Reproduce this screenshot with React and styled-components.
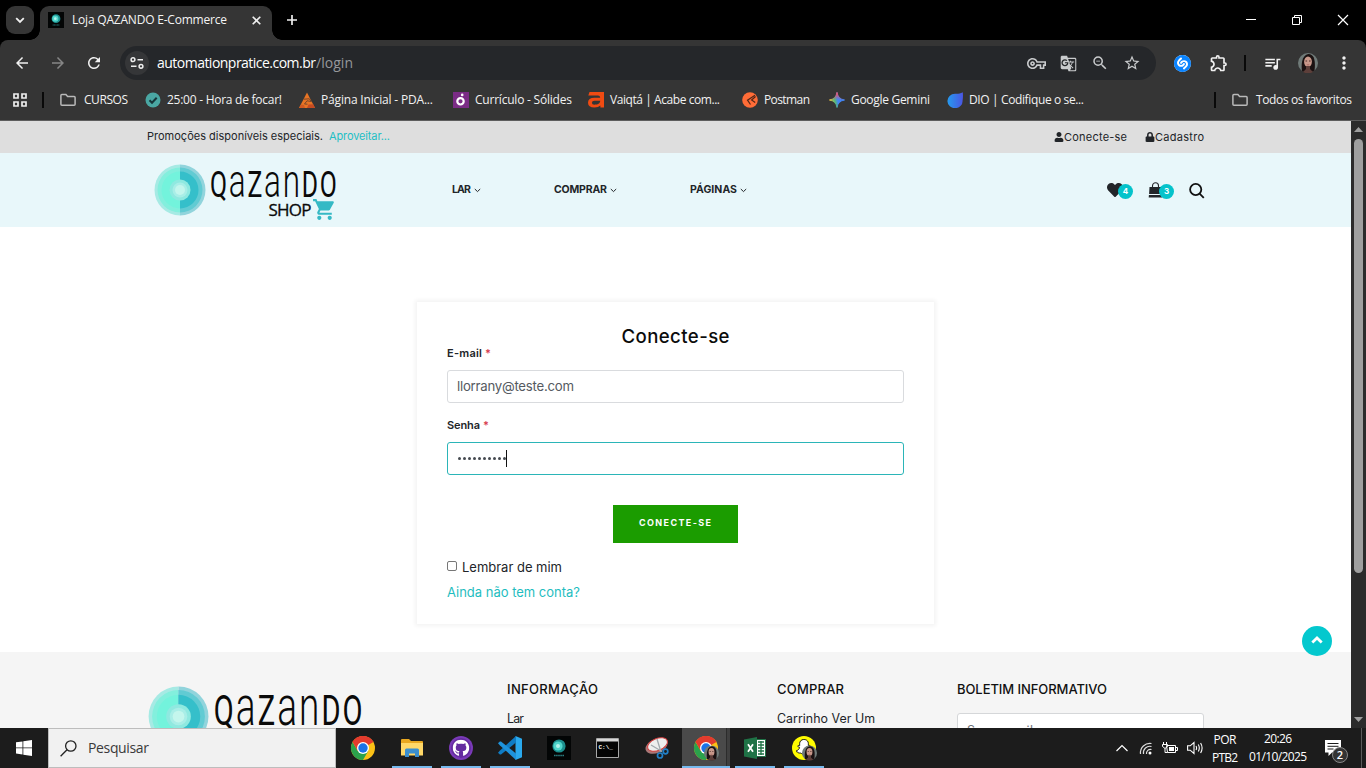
import React, { useLayoutEffect, useRef, useState } from 'react';
import styled, { createGlobalStyle, css } from 'styled-components';
import {
  MdArrowBack, MdArrowForward, MdRefresh, MdOutlineVpnKey, MdGTranslate, MdZoomOut,
  MdStarBorder, MdOutlineExtension, MdQueueMusic, MdMoreVert, MdShoppingCart,
} from 'react-icons/md';
import { FaHeart, FaUser, FaLock, FaGithub, FaSnapchatGhost } from 'react-icons/fa';
import { SiShazam } from 'react-icons/si';

const ui = '"Open Sans", "Noto Sans", sans-serif';
const shop = 'Inter, "Open Sans", sans-serif';

const Global = createGlobalStyle`
  * { box-sizing: border-box; }
  body { margin: 0; overflow: hidden; background: #000; }
  svg { display: block; flex: none; }
`;

/* Text that tracks its letters to fill a given measure */
const FitBox = styled.span`
  display: block;
  flex: none;
  white-space: pre;
  width: ${(p) => p.$w}px;
  & > span { display: inline-block; }
`;

function Fit({ w, children }) {
  const ref = useRef(null);
  const [space, setSpace] = useState(0);
  useLayoutEffect(() => {
    const natural = ref.current.getBoundingClientRect().width;
    setSpace((w - natural) / Math.max(1, children.length - 1));
  }, [w, children]);
  return (
    <FitBox $w={w}>
      <span ref={ref} style={{ letterSpacing: space }}>{children}</span>
    </FitBox>
  );
}

const Screen = styled.div`
  width: 1366px;
  height: 768px;
  display: flex;
  flex-direction: column;
  overflow: hidden;
  background: #000;
`;

/* ---------- Browser ---------- */
const TabStrip = styled.div`
  height: 40px;
  flex: none;
  display: flex;
  align-items: center;
  padding-left: 6px;
  font: 12px/16px ${ui};
  color: #f4f4f4;
`;
const TabSearch = styled.div`
  width: 28px;
  height: 28px;
  border-radius: 9px;
  background: #353535;
  display: grid;
  place-items: center;
`;
const Tab = styled.div`
  position: relative;
  align-self: flex-end;
  width: 232px;
  height: 34px;
  margin-left: 6px;
  padding: 0 11px 6px 8px;
  display: flex;
  align-items: center;
  gap: 8px;
  background: #353535;
  border-radius: 9px 9px 0 0;
  &::before, &::after {
    content: '';
    position: absolute;
    bottom: 0;
    width: 10px;
    height: 10px;
  }
  &::before { left: -10px; background: radial-gradient(circle at 0 0, transparent 9.5px, #353535 10px); }
  &::after { right: -10px; background: radial-gradient(circle at 100% 0, transparent 9.5px, #353535 10px); }
`;
const TabClose = styled.span`margin-left: auto; display: block;`;
const NewTab = styled.span`margin-left: 14px;`;
const WindowButtons = styled.div`
  margin-left: auto;
  display: flex;
  align-items: center;
  gap: 34px;
  padding-right: 17px;
`;
const Chrome = styled.div`
  height: 81px;
  flex: none;
  background: #353535;
  border-radius: 8px 8px 0 0;
  border-bottom: 1px solid #5d5d5d;
  color: #f1f1f1;
`;
const Toolbar = styled.div`
  height: 46px;
  display: flex;
  align-items: center;
  padding: 0 12px 0 13px;
`;
const NavButtons = styled.div`
  display: flex;
  gap: 18px;
  width: 107px;
  & svg:nth-child(2) { color: #868686; }
`;
const Omnibox = styled.div`
  width: 1036px;
  height: 34px;
  border-radius: 17px;
  background: #25272a;
  display: flex;
  align-items: center;
  padding: 0 15px 0 5px;
  font: 14px/20px ${ui};
  color: #fff;
`;
const SiteInfo = styled.div`
  width: 24px;
  height: 24px;
  margin-right: 8px;
  border-radius: 50%;
  background: #353638;
  display: grid;
  place-items: center;
`;
const Path = styled.span`color: #96989b;`;
const OmniIcons = styled.div`
  margin-left: auto;
  display: flex;
  align-items: center;
  gap: 14px;
  color: #c9cbcd;
`;
const Extensions = styled.div`
  display: flex;
  align-items: center;
  margin-left: auto;
`;
const Ext = styled.span`margin-left: 18px;`;
const Face = styled.span`margin: 0 16px;`;
const ShazamDisc = styled.span`
  border-radius: 50%;
  background: #fff;
  color: #0a84ff;
`;
const Divider = styled.i`
  width: 2px;
  height: 16px;
  background: #090909;
  margin: 0 ${(p) => p.$right}px 0 ${(p) => p.$left}px;
`;
const Bookmarks = styled.div`
  height: 34px;
  padding: 0 14px 6px 13px;
  display: flex;
  align-items: center;
  font: 12px/16px ${ui};
  color: #f1f1f1;
`;
const Bookmark = styled.div`
  display: flex;
  align-items: center;
  gap: ${(p) => p.$gap || 6}px;
  margin-left: ${(p) => p.$left}px;
`;

/* ---------- Shop page ---------- */
const Viewport = styled.div`
  flex: 1;
  min-height: 0;
  display: flex;
`;
const Page = styled.div`
  position: relative;
  width: 1351px;
  height: 607px;
  overflow: hidden;
  background: #fff;
  font-family: ${shop};
  color: #222529;
`;
const Scrollbar = styled.div`
  width: 15px;
  background: #2b2b2b;
  display: flex;
  flex-direction: column;
  align-items: center;
  padding: 6px 0;
`;
const ScrollThumb = styled.div`
  width: 9px;
  height: 434px;
  margin: 7px 0 auto;
  border-radius: 5px;
  background: #9f9f9f;
`;
const PromoBar = styled.div`
  height: 32px;
  padding: 0 147px 2px;
  background: #dedede;
  display: flex;
  align-items: center;
  font-size: 11px;
  line-height: 16px;
`;
const PromoLink = styled.span`margin-left: 6px; color: #1fbec5;`;
const Account = styled.div`
  display: flex;
  align-items: center;
  margin-left: ${(p) => p.$left || 'auto'};
  padding-top: 1px;
`;
const ShopHeader = styled.header`
  height: 74px;
  padding: 0 146px 0 154px;
  background: #e8f7fa;
  display: flex;
`;
const HeaderLogo = styled.div`width: 298px; padding-top: 11px;`;
const Menu = styled.nav`
  display: flex;
  gap: 73px;
  font-size: 10.5px;
  font-weight: 700;
  line-height: 72px;
`;
const MenuItem = styled.span`
  display: flex;
  align-items: center;
  gap: 3px;
`;
const HeaderIcons = styled.div`
  margin-left: auto;
  display: flex;
  gap: 26px;
  padding-top: 29px;
`;
const IconSlot = styled.span`position: relative; width: 15px; height: 16px;`;
const Badge = styled.b`
  position: absolute;
  left: 11px;
  top: 2px;
  width: 15px;
  height: 15px;
  border-radius: 50%;
  background: #05c3cb;
  color: #fff;
  font-size: 8px;
  line-height: 15px;
  text-align: center;
`;
const LoginCard = styled.form`
  width: 517px;
  height: 322px;
  margin: 75px 0 0 417px;
  padding: 22px 30px 0;
  background: #fff;
  box-shadow: 0 0 4px 2px #f3f3f3;
`;
const Title = styled.h1`
  margin: 0;
  display: flex;
  justify-content: center;
  font-size: 18.6px;
  font-weight: 500;
  line-height: 24px;
  color: #0b0b0b;
`;
const Label = styled.label`
  display: flex;
  gap: 3px;
  margin-top: ${(p) => p.$top}px;
  font-size: 11px;
  line-height: 16px;
  font-weight: 600;
`;
const Star = styled.span`color: #d8404f;`;
const Field = styled.div`
  height: 33px;
  margin-top: 9px;
  padding: 0 9px 1px;
  display: flex;
  align-items: center;
  border: 1px solid ${(p) => (p.$focus ? '#2bb5b8' : '#d9dbde')};
  border-radius: 3px;
  background: #fff;
  font-size: 13.2px;
  line-height: 18px;
  color: #555a61;
`;
const Caret = styled.i`width: 1px; height: 17px; background: #111;`;
const Dots = styled.span`
  display: flex;
  gap: 2px;
  padding-left: 1px;
`;
const Dot = styled.i`width: 3px; height: 3px; border-radius: 50%; background: #454a50;`;
const Submit = styled.div`
  width: 125px;
  height: 38px;
  margin: 30px auto 0;
  padding: 0 1px 2px 0;
  display: grid;
  place-items: center;
  background: #1b9c00;
  color: #fff;
  font-size: 9px;
  font-weight: 700;
  line-height: 12px;
`;
const Remember = styled.div`
  display: flex;
  align-items: center;
  gap: 5px;
  margin-top: 15px;
  font-size: 13px;
  line-height: 18px;
`;
const Checkbox = styled.i`
  width: 10px;
  height: 10px;
  margin-bottom: 2px;
  border: 1px solid #777;
  border-radius: 2px;
`;
const SignUp = styled.div`
  margin-top: 7px;
  font-size: 13px;
  line-height: 18px;
  color: #1fbdc0;
`;
const Footer = styled.footer`
  height: 110px;
  margin-top: 28px;
  padding: 0 147px 0 148px;
  background: #f5f5f5;
  display: grid;
  grid-template-columns: 359px 270px 180px 247px;
`;
const FooterLogo = styled.div`padding-top: 34px;`;
const FooterHead = styled.h2`
  margin: 28px 0 0;
  font-size: 13px;
  font-weight: 500;
  line-height: 19px;
  color: #111;
`;
const FooterLink = styled.div`
  margin-top: 11px;
  font-size: 12.4px;
  line-height: 18px;
`;
const Newsletter = styled.div`
  height: 34px;
  margin-top: 14px;
  padding: 8px 9px;
  border: 1px solid #d5d7d9;
  border-radius: 3px;
  background: #fff;
  font-size: 12.4px;
  line-height: 18px;
  color: #6d7278;
`;
const ToTop = styled.div`
  position: absolute;
  left: 1302px;
  top: 505px;
  width: 30px;
  height: 30px;
  padding-bottom: 2px;
  border-radius: 50%;
  background: #04c8ce;
  display: grid;
  place-items: center;
`;

/* ---------- Taskbar ---------- */
const Bar = styled.div`
  height: 40px;
  flex: none;
  display: flex;
  background: #1c1c1c;
  color: #fff;
  font-family: ${ui};
`;
const Start = styled.div`
  width: 48px;
  display: grid;
  place-items: center;
`;
const SearchBox = styled.div`
  width: 288px;
  border: 1px solid #bdbdbd;
  background: #f1f1f1;
  color: #3a3a3a;
  display: flex;
  align-items: center;
  gap: 11px;
  padding-left: 11px;
  font-size: 14px;
  line-height: 20px;
`;
const Apps = styled.div`display: flex; margin-left: 2px;`;
const AppSlot = styled.div`
  width: 49px;
  height: 40px;
  display: grid;
  place-items: center;
  ${(p) => p.$open && css`
    background: linear-gradient(#76b9ed, #76b9ed) center bottom / 40px 2px no-repeat;
  `}
  ${(p) => p.$active && css`
    background:
      linear-gradient(#76b9ed, #76b9ed) 1px bottom / 48px 2px no-repeat,
      linear-gradient(90deg, #4a4a4a 44px, #2c2c2c 44px, #2c2c2c 45px, #3f3f3f 45px) 1px 0 / 48px 40px no-repeat;
  `}
`;
const Tray = styled.div`
  margin-left: auto;
  display: flex;
  align-items: center;
  font-size: 12px;
  line-height: 18px;
  padding-right: 4px;
`;
const TrayIcons = styled.div`
  display: flex;
  align-items: center;
  gap: 9px;
`;
const TwoLines = styled.div`
  width: ${(p) => p.$w}px;
  margin-left: ${(p) => p.$left}px;
  height: 38px;
  padding-top: ${(p) => p.$drop || 0}px;
  display: flex;
  flex-direction: column;
  align-items: center;
`;
const Notices = styled.div`
  position: relative;
  margin-left: 18px;
  width: 37px;
  height: 40px;
  padding-top: 12px;
  border-right: 1px solid #5a5a5a;
`;
const NoticeCount = styled.span`
  position: absolute;
  left: 7px;
  top: 19px;
  width: 16px;
  height: 16px;
  border: 1px solid #888;
  border-radius: 50%;
  background: #343434;
  font-size: 11px;
  font-weight: 600;
  line-height: 14px;
  text-align: center;
`;

/* ---------- Drawings ---------- */
const LogoArt = styled.svg`overflow: visible;`;

function Logo({ scale, withShop, id }) {
  const h = withShop ? 58 : 52;
  return (
    <LogoArt width={184 * scale} height={h * scale} viewBox={`0 0 184 ${h}`}>
      <defs>
        <clipPath id={`${id}l`}><path d="M0 0h26v58H0z" /></clipPath>
        <clipPath id={`${id}r`}><path d="M26 0h30v58H26z" /></clipPath>
      </defs>
      <g clipPath={`url(#${id}l)`}>
        <circle cx="26" cy="26" r="25.5" fill="#a6eae4" />
        <circle cx="26" cy="26" r="22.5" fill="#83efdd" />
        <circle cx="26" cy="26" r="18.5" fill="#73f3dc" />
      </g>
      <g clipPath={`url(#${id}r)`}>
        <circle cx="26" cy="26" r="25.5" fill="#91d4dc" />
        <circle cx="26" cy="26" r="22.5" fill="#61cbd3" />
        <circle cx="26" cy="26" r="18.5" fill="#35bfca" />
      </g>
      <circle cx="26" cy="26" r="10.5" fill="#8fe9e0" />
      <circle cx="26" cy="26" r="7.5" fill="#a9eee7" />
      <circle cx="26" cy="26" r="5" fill="#c4f6ed" />
      <text transform="translate(56 33) scale(.67 1)" fill="#0a0a0a" fontFamily="Roboto, sans-serif" fontSize="37" fontWeight="400" letterSpacing="2.600">
        Q<tspan fontSize="47" fontWeight="300">a</tspan>Z<tspan fontSize="47" fontWeight="300">an</tspan>DO
      </text>
      {withShop && (
        <>
          <text x="114.5" y="52" fill="#0a0a0a" fontFamily="Open Sans, sans-serif" fontSize="17" letterSpacing="-.8" stroke="#0a0a0a" strokeWidth=".3">SHOP</text>
          <MdShoppingCart x="158" y="33" size="25" color="#35b9c5" />
        </>
      )}
    </LogoArt>
  );
}

const Caretlet = () => (
  <svg width="7" height="5" viewBox="0 0 7 5" fill="none" stroke="#222529"><path d="M.8 1l2.7 2.6L6.2 1" /></svg>
);

const FavIcon = ({ size }) => (
  <svg width={size} height={size} viewBox="0 0 24 24">
    <rect width="24" height="24" fill="#030505" />
    <circle cx="12" cy="10" r="6.6" fill="#1c8f8e" />
    <circle cx="11" cy="10" r="4.6" fill="#4fd6cb" />
    <circle cx="11" cy="10" r="2" fill="#b4f4ec" />
    <path d="M7 19.5h10" stroke="#2b7d80" strokeWidth="1.4" strokeDasharray="1.6 .5" />
  </svg>
);

const Portrait = ({ size, ...rest }) => (
  <svg width={size} height={size} viewBox="0 0 20 20" {...rest}>
    <circle cx="10" cy="10" r="10" fill="#6f7a78" />
    <path d="M4 18C3 11 4 2 10.500 1 17 1 17.500 10 16.500 17.500A10 10 0 0 1 4 18z" fill="#1b1212" />
    <ellipse cx="10" cy="8.800" rx="3.900" ry="5.400" fill="#c9998b" />
    <path d="M8 13h4v3l3 3a10 10 0 0 1-10 0l3-3z" fill="#5d3f3a" />
    <path d="M7.500 8h1.600M11 8h1.600" stroke="#4c2c28" />
    <path d="M8.800 11.800h2.400" stroke="#a3605c" strokeWidth=".8" />
  </svg>
);

const ChromeMark = ({ person }) => (
  <svg width="26" height="26" viewBox="0 0 26 26">
    <circle cx="13" cy="13" r="12" fill="#fbc116" />
    <path d="M13 13L2.600 7A12 12 0 0 1 23.400 7z" fill="#e33b2e" />
    <path d="M2.600 7A12 12 0 0 0 13 25l5.200-9L13 13 7.800 16z" fill="#2ba24c" />
    <path d="M13 7h10.400A12 12 0 0 0 2.600 7l5.200 9z" fill="#e33b2e" />
    <circle cx="13" cy="13" r="6" fill="#fff" />
    <circle cx="13" cy="13" r="4.700" fill="#1a73e8" />
    {person && <Portrait x="11" y="10.500" size="15" />}
  </svg>
);

const FolderIcon = () => (
  <svg width="16" height="14" viewBox="0 0 16 14" fill="none" stroke="#b9b9b9" strokeWidth="1.500">
    <path d="M.9 2.600q0-1 1-1h4l1.700 2h6.500q1 0 1 1v6.700q0 1-1 1H1.900q-1 0-1-1z" />
  </svg>
);

const marks = {
  focus: (
    <svg width="16" height="16" viewBox="0 0 16 16">
      <circle cx="8" cy="8" r="7.500" fill="#4aa7a3" /><path d="M4.500 8.200l2.500 2.500 4.700-5" fill="none" stroke="#17363a" strokeWidth="2" />
    </svg>
  ),
  pda: (
    <svg width="16" height="16" viewBox="0 0 16 16">
      <path d="M8 .5L16 16H0z" fill="#e87424" /><path d="M4.800 7.200l5.500-.4 2 2.700-4.300-.7-2.500 3.200 3 .2" stroke="#6b4129" strokeWidth=".9" fill="none" />
      <path d="M8 16l1.500-3.500 4.800-.2L16 16z" fill="#c54b22" /><path d="M0 16l2-3.500 3 .5 1 3z" fill="#cf5a22" />
    </svg>
  ),
  solides: (
    <svg width="16" height="16" viewBox="0 0 16 16">
      <rect width="16" height="16" fill="#7b2c86" /><circle cx="7.500" cy="9.300" r="3.200" fill="none" stroke="#fff" strokeWidth="2.200" /><circle cx="9.200" cy="2.900" r="1.300" fill="#fff" />
    </svg>
  ),
  vaiqta: (
    <svg width="16" height="16" viewBox="0 0 16 16" fill="#f04b12">
      <path d="M1.500 0H16v15.500h-3.600v-2Q10.500 15.500 6.500 15.500 0 15.500 0 10.800 0 5.800 6.500 5.800h5.700Q12.200 3.600 10 3.600H.3zM12.200 8.800H6.500q-2.600 0-2.600 2 0 1.900 2.400 1.900c3.400 0 5.900-1.200 5.900-3.900z" />
    </svg>
  ),
  postman: (
    <svg width="16" height="16" viewBox="0 0 16 16">
      <circle cx="8" cy="8" r="7.800" fill="#ff6c37" /><path d="M13 3.200L5.500 8.200l3 4.300M13.600 4.500l-4 3.500 3.600 2.600" stroke="#512617" strokeWidth="1.200" fill="none" />
    </svg>
  ),
  gemini: (
    <svg width="16" height="16" viewBox="0 0 16 16">
      <defs>
        <linearGradient id="gem" x1="0" y1=".6" x2="1" y2=".4"><stop offset="0" stopColor="#f3c63d" /><stop offset=".35" stopColor="#55b97a" /><stop offset=".55" stopColor="#4285f4" /><stop offset="1" stopColor="#4285f4" /></linearGradient>
        <linearGradient id="gem2" x1="0" y1="0" x2="0" y2="1"><stop offset="0" stopColor="#ee5267" /><stop offset=".5" stopColor="#ee5267" stopOpacity="0" /></linearGradient>
      </defs>
      <path d="M8 .5Q9 7 15.500 8 9 9 8 15.500 7 9 .5 8 7 7 8 .5z" fill="url(#gem)" stroke="url(#gem)" />
      <path d="M8 .5Q9 7 15.500 8 9 9 8 15.500 7 9 .5 8 7 7 8 .5z" fill="url(#gem2)" stroke="url(#gem2)" />
    </svg>
  ),
  dio: (
    <svg width="16" height="16" viewBox="0 0 16 16">
      <defs><linearGradient id="dio"><stop offset="0" stopColor="#259bef" /><stop offset="1" stopColor="#4b55e4" /></linearGradient></defs>
      <path d="M15.800.3c.3 3 .2 6-.2 8.200A7.600 7.200 0 1 1 8 1.800C11 1.800 13 2 15.800.3z" fill="url(#dio)" />
    </svg>
  ),
};

const bookmarks = [
  { icon: 'focus', text: '25:00 - Hora de focar!', w: 115, left: 17 },
  { icon: 'pda', text: 'Página Inicial - PDA...', w: 112, left: 17 },
  { icon: 'solides', text: 'Currículo - Sólides', w: 97, left: 20 },
  { icon: 'vaiqta', text: 'Vaiqtá | Acabe com...', w: 110, left: 16 },
  { icon: 'postman', text: 'Postman', w: 46, left: 22 },
  { icon: 'gemini', text: 'Google Gemini', w: 79, left: 19 },
  { icon: 'dio', text: 'DIO | Codifique o se...', w: 115, left: 17 },
];

function Browser() {
  return (
    <>
      <TabStrip>
        <TabSearch>
          <svg width="10" height="7" viewBox="0 0 10 7" fill="none" stroke="#f0f0f0" strokeWidth="1.800"><path d="M1.200 1.200L5 5l3.800-3.800" /></svg>
        </TabSearch>
        <Tab>
          <FavIcon size={16} />
          <Fit w={155}>Loja QAZANDO E-Commerce</Fit>
          <TabClose>
            <svg width="9" height="9" viewBox="0 0 9 9" stroke="#eee" strokeWidth="1.600"><path d="M.7.7l7.600 7.600M8.300.7L.7 8.300" /></svg>
          </TabClose>
        </Tab>
        <NewTab>
          <svg width="12" height="12" viewBox="0 0 12 12" stroke="#eee" strokeWidth="1.700"><path d="M6 1v10M1 6h10" /></svg>
        </NewTab>
        <WindowButtons>
          <svg width="12" height="12" viewBox="0 0 12 12" stroke="#fff"><path d="M1 5.500h10" /></svg>
          <svg width="12" height="12" viewBox="0 0 12 12" stroke="#fff" fill="none"><path d="M1.500 3.500h7v7h-7zM3.500 3.500v-2h7v7h-2" /></svg>
          <svg width="12" height="12" viewBox="0 0 12 12" stroke="#fff" strokeWidth="1.200"><path d="M1 1l10 10M11 1L1 11" /></svg>
        </WindowButtons>
      </TabStrip>
      <Chrome>
        <Toolbar>
          <NavButtons>
            <MdArrowBack size={18} /><MdArrowForward size={18} /><MdRefresh size={18} />
          </NavButtons>
          <Omnibox>
            <SiteInfo>
              <svg width="14" height="12" viewBox="0 0 14 12" fill="none" stroke="#eee" strokeWidth="1.500">
                <circle cx="3" cy="2.700" r="1.900" /><path d="M7.500 2.700H13M1 9.300h5.500" /><circle cx="11" cy="9.300" r="1.900" />
              </svg>
            </SiteInfo>
            <Fit w={159}>automationpratice.com.br</Fit>
            <Path><Fit w={37}>/login</Fit></Path>
            <OmniIcons>
              <MdOutlineVpnKey size={19} />
              <MdGTranslate size={17} />
              <MdZoomOut size={18} />
              <MdStarBorder size={18} />
            </OmniIcons>
          </Omnibox>
          <Extensions>
            <ShazamDisc><SiShazam size={17} /></ShazamDisc>
            <Ext><MdOutlineExtension size={20} /></Ext>
            <Divider $left={15} $right={17} />
            <MdQueueMusic size={19} />
            <Face><Portrait size={20} /></Face>
            <MdMoreVert size={20} />
          </Extensions>
        </Toolbar>
        <Bookmarks>
          <svg width="14" height="14" viewBox="0 0 14 14" fill="none" stroke="#eee" strokeWidth="1.700">
            <path d="M1 1h4v4H1zM9 1h4v4H9zM1 9h4v4H1zM9 9h4v4H9z" />
          </svg>
          <Divider $left={15} $right={0} />
          <Bookmark $left={16} $gap={8}><FolderIcon /><Fit w={44}>CURSOS</Fit></Bookmark>
          {bookmarks.map((b) => (
            <Bookmark key={b.icon} $left={b.left}>{marks[b.icon]}<Fit w={b.w}>{b.text}</Fit></Bookmark>
          ))}
          <Divider $left={130} $right={0} />
          <Bookmark $left={16} $gap={8}><FolderIcon /><Fit w={96}>Todos os favoritos</Fit></Bookmark>
        </Bookmarks>
      </Chrome>
    </>
  );
}

function ShopPage() {
  return (
    <Page>
      <PromoBar>
        <Fit w={176}>Promoções disponíveis especiais.</Fit>
        <PromoLink><Fit w={61}>Aproveitar...</Fit></PromoLink>
        <Account><FaUser size={10} /><Fit w={63}>Conecte-se</Fit></Account>
        <Account $left="18px"><FaLock size={10} /><Fit w={49}>Cadastro</Fit></Account>
      </PromoBar>
      <ShopHeader>
        <HeaderLogo><Logo scale={1} withShop id="h" /></HeaderLogo>
        <Menu>
          <MenuItem><Fit w={19}>LAR</Fit><Caretlet /></MenuItem>
          <MenuItem><Fit w={53}>COMPRAR</Fit><Caretlet /></MenuItem>
          <MenuItem><Fit w={47}>PÁGINAS</Fit><Caretlet /></MenuItem>
        </Menu>
        <HeaderIcons>
          <IconSlot><FaHeart size={16} /><Badge>4</Badge></IconSlot>
          <IconSlot>
            <svg width="15" height="16" viewBox="0 0 15 16">
              <path d="M1.500 5h12l.4 7H1.100zM.9 13h13.200l.2 2.500H.7z" fill="#222529" />
              <path d="M4.500 7V3.800a3 3 0 0 1 6 0V7" fill="none" stroke="#222529" strokeWidth="1.100" />
            </svg>
            <Badge>3</Badge>
          </IconSlot>
          <svg width="16" height="17" viewBox="0 0 16 17" fill="none" stroke="#111" strokeWidth="1.800">
            <circle cx="6.700" cy="7.500" r="5.600" /><path d="M10.600 11.600l4.200 4.200" />
          </svg>
        </HeaderIcons>
      </ShopHeader>
      <LoginCard>
        <Title><Fit w={108}>Conecte-se</Fit></Title>
        <Label $top={-3}><Fit w={35}>E-mail</Fit><Star>*</Star></Label>
        <Field><Fit w={117}>llorrany@teste.com</Fit></Field>
        <Label $top={14}><Fit w={33}>Senha</Fit><Star>*</Star></Label>
        <Field $focus>
          <Dots>{Array.from({ length: 10 }, (_, i) => <Dot key={i} />)}</Dots>
          <Caret />
        </Field>
        <Submit><Fit w={72}>CONECTE-SE</Fit></Submit>
        <Remember><Checkbox /><Fit w={100}>Lembrar de mim</Fit></Remember>
        <SignUp><Fit w={133}>Ainda não tem conta?</Fit></SignUp>
      </LoginCard>
      <Footer>
        <FooterLogo><Logo scale={1.174} id="f" /></FooterLogo>
        <div>
          <FooterHead><Fit w={91}>INFORMAÇÃO</Fit></FooterHead>
          <FooterLink><Fit w={17}>Lar</Fit></FooterLink>
        </div>
        <div>
          <FooterHead><Fit w={67}>COMPRAR</Fit></FooterHead>
          <FooterLink><Fit w={98}>Carrinho Ver Um</Fit></FooterLink>
        </div>
        <div>
          <FooterHead><Fit w={150}>BOLETIM INFORMATIVO</Fit></FooterHead>
          <Newsletter><Fit w={66}>Seu e-mail</Fit></Newsletter>
        </div>
      </Footer>
      <ToTop>
        <svg width="12" height="8" viewBox="0 0 12 8" fill="none" stroke="#fff" strokeWidth="2.800"><path d="M1.300 6.500L6 2l4.700 4.500" /></svg>
      </ToTop>
    </Page>
  );
}

function Taskbar() {
  return (
    <Bar>
      <Start>
        <svg width="16" height="16" viewBox="0 0 16 16" fill="#fff">
          <path d="M0 2.300l6.500-.9v6.100H0zM7.300 1.300L16 0v7.500H7.300zM0 8.300h6.500v6.200L0 13.600zM7.300 8.300H16V16l-8.700-1.300z" />
        </svg>
      </Start>
      <SearchBox>
        <svg width="17" height="17" viewBox="0 0 17 17" fill="none" stroke="#222" strokeWidth="1.300">
          <circle cx="10.800" cy="6" r="5.200" /><path d="M7 9.800L.6 16.300" />
        </svg>
        <Fit w={61}>Pesquisar</Fit>
      </SearchBox>
      <Apps>
        <AppSlot><ChromeMark /></AppSlot>
        <AppSlot $open>
          <svg width="22" height="20" viewBox="0 0 22 20">
            <path d="M0 2q0-1 1-1h7l2 2h11q1 0 1 1v13H0z" fill="#e9a820" /><path d="M0 5h22v12.500H0z" fill="#ffd868" />
            <path d="M4 19v-7q0-1.500 1.500-1.500h11Q18 10.500 18 12v7h-4v-3.500H8V19z" fill="#3b8fce" />
          </svg>
        </AppSlot>
        <AppSlot $open>
          <svg width="24" height="24" viewBox="0 0 24 24">
            <circle cx="12" cy="12" r="12" fill="#7a3ab8" /><circle cx="12" cy="12" r="10" fill="#642ca0" />
            <FaGithub x="3.500" y="3.500" size="17" color="#fff" />
          </svg>
        </AppSlot>
        <AppSlot $open>
          <svg width="24" height="24" viewBox="0 0 24 24">
            <path d="M17.500 0L24 2.800v18.400L17.500 24z" fill="#2aa9ed" />
            <path d="M0 16.800L1.800 18.600 3 18.600 18 6.500V0L2 14.500z" fill="#0f7cc4" />
            <path d="M0 7.200L1.800 5.400 3 5.400 18 17.500V24L2 9.500z" fill="#1e93dc" />
          </svg>
        </AppSlot>
        <AppSlot><FavIcon size={24} /></AppSlot>
        <AppSlot>
          <svg width="23" height="20" viewBox="0 0 23 20">
            <path d="M.5.5h22v19H.5z" fill="#050505" stroke="#a9a9a9" /><path d="M1 1h21v2.500H1z" fill="#d8d8d8" />
            <text x="2.500" y="10.500" fontSize="6" fontWeight="700" fontFamily="Liberation Mono, monospace" fill="#fff">C:\_</text>
          </svg>
        </AppSlot>
        <AppSlot>
          <svg width="24" height="24" viewBox="0 0 24 24" fill="none">
            <ellipse cx="11.500" cy="10" rx="11.500" ry="7" transform="rotate(-22 11.500 10)" fill="#a77" />
            <ellipse cx="12.500" cy="8.500" rx="10.500" ry="6" transform="rotate(-22 12.500 8.500)" fill="#eee" stroke="#d23c3c" />
            <path d="M12 3l4 13M6 9l11 6.500" stroke="#a2a9ae" strokeWidth="1.300" />
            <circle cx="15" cy="19.500" r="2.500" stroke="#2180c8" strokeWidth="1.700" /><circle cx="20.500" cy="15.500" r="2.300" stroke="#2180c8" strokeWidth="1.700" />
          </svg>
        </AppSlot>
        <AppSlot $active><ChromeMark person /></AppSlot>
        <AppSlot $open>
          <svg width="22" height="22" viewBox="0 0 22 22">
            <path d="M11 2.500h10.500v17H11z" fill="#fff" stroke="#1f7246" />
            <path d="M14 5h6M14 8h6M14 11h6M14 14h6M14 17h6M17 4v14" stroke="#1f7246" strokeWidth="1.300" />
            <path d="M0 2.500L13 0v22L0 19.500z" fill="#1f7246" />
            <path d="M4 7.300l5 7.400M9 7.300l-5 7.400" stroke="#fff" strokeWidth="1.800" />
          </svg>
        </AppSlot>
        <AppSlot $open>
          <svg width="26" height="26" viewBox="0 0 26 26">
            <circle cx="13" cy="13" r="12" fill="#fffc00" />
            <FaSnapchatGhost x="5" y="4" size="16" color="#fff" stroke="#111" strokeWidth="30" />
            <Portrait x="11" y="10.500" size="15" />
          </svg>
        </AppSlot>
      </Apps>
      <Tray>
        <TrayIcons>
          <svg width="12" height="8" viewBox="0 0 12 8" fill="none" stroke="#fff" strokeWidth="1.200"><path d="M.5 7L6 1.500 11.500 7" /></svg>
          <svg width="16" height="14" viewBox="0 0 16 14" fill="none" stroke="#ddd" strokeWidth="1.200">
            <path d="M3.500 13A9.500 9.500 0 0 1 14.500 2.500M6.500 13A6.500 6.500 0 0 1 14.500 5.500M9.500 13a4 4 0 0 1 5-4.500" /><circle cx="13" cy="12" r="1.500" fill="#fff" stroke="none" />
          </svg>
          <svg width="16" height="12" viewBox="0 0 16 12" fill="none" stroke="#fff">
            <path d="M4.500 3.500h9v7h-8zM14 5.500h1.500v3H14M1.500 0v2M4.500 0v2M.5 2.500h5v2l-2 1.500h-1l-2-1.500zM3 6v4.500h2.500" /><path d="M7 5h5v4H7z" fill="#fff" stroke="none" />
          </svg>
          <svg width="17" height="14" viewBox="0 0 17 14" fill="none" stroke="#fff" strokeWidth="1.100">
            <path d="M.6 4.800h2.600L7 1.500v11L3.200 9.200H.6zM9 5q1.200 2 0 4M11.300 3.500q2 3.500 0 7M13.600 2q3 5 0 10" />
          </svg>
        </TrayIcons>
        <TwoLines $w={26} $left={8} $drop={2}><Fit w={23}>POR</Fit><Fit w={26}>PTB2</Fit></TwoLines>
        <TwoLines $w={58} $left={11} $drop={1}><Fit w={28}>20:26</Fit><Fit w={58}>01/10/2025</Fit></TwoLines>
        <Notices>
          <svg width="16" height="16" viewBox="0 0 16 16">
            <path d="M0 0h16v12.500H7L3.500 16v-3.500H0z" fill="#fff" /><path d="M2.500 3.500h11M2.500 6.300h11M2.500 9h6" stroke="#1c1c1c" />
          </svg>
          <NoticeCount>2</NoticeCount>
        </Notices>
      </Tray>
    </Bar>
  );
}

export default function App() {
  return (
    <Screen>
      <Global />
      <Browser />
      <Viewport>
        <ShopPage />
        <Scrollbar>
          <svg width="9" height="5" viewBox="0 0 9 5" fill="#9f9f9f"><path d="M4.500 0L9 5H0z" /></svg>
          <ScrollThumb />
          <svg width="9" height="5" viewBox="0 0 9 5" fill="#9f9f9f"><path d="M0 0h9L4.500 5z" /></svg>
        </Scrollbar>
      </Viewport>
      <Taskbar />
    </Screen>
  );
}
